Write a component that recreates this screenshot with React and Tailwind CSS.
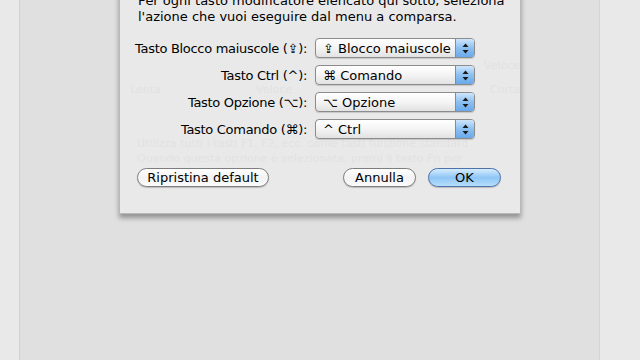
const rows = [
    { label: "Tasto Blocco maiuscole (⇪):", value: "⇪ Blocco maiuscole" },
    { label: "Tasto Ctrl (^):", value: "⌘ Comando" },
    { label: "Tasto Opzione (⌥):", value: "⌥ Opzione" },
    { label: "Tasto Comando (⌘):", value: "^ Ctrl" },
];

const PopupArrows = () => (
    <svg width="7" height="11" viewBox="0 0 7 11">
        <path d="M3.5 0.5 L6.5 4 L0.5 4 Z" fill="#1a1a1a" />
        <path d="M0.5 7 L6.5 7 L3.5 10.5 Z" fill="#1a1a1a" />
    </svg>
);

const Popup = ({ value }) => (
    <div className="flex h-[20px] w-[160px] overflow-hidden rounded-[4px] border border-[#8c8c8c] bg-gradient-to-b from-[#ffffff] via-[#f4f4f4] to-[#e2e2e2] shadow-[0_1px_1px_rgba(0,0,0,0.15)]">
        <div className="flex flex-1 items-center pl-[7px] text-[13px] leading-none text-black">{value}</div>
        <div className="flex w-[19px] items-center justify-center border-l border-[#6f8fb8] bg-gradient-to-b from-[#cfe6fb] via-[#8cc0f1] to-[#6aa9ea]">
            <PopupArrows />
        </div>
    </div>
);

const Button = ({ children, width, primary }) => (
    <div
        className={
            primary
                ? "flex h-[19px] items-center justify-center rounded-full border border-[#4f72a8] bg-gradient-to-b from-[#d6ecff] via-[#8fc6f6] to-[#b6defc] text-[13px] leading-none text-black shadow-[0_1px_1px_rgba(0,0,0,0.2)]"
                : "flex h-[19px] items-center justify-center rounded-full border border-[#7e7e7e] bg-gradient-to-b from-[#ffffff] via-[#f3f3f3] to-[#fbfbfb] text-[13px] leading-none text-black shadow-[0_1px_1px_rgba(0,0,0,0.2)]"
        }
        style={{ width }}
    >
        {children}
    </div>
);

const App = () => {
    return (
        <div className="flex h-[360px] w-[640px] overflow-hidden bg-[#e8e8e8] font-['DejaVu_Sans',sans-serif]">
            <div className="w-[20px] border-r border-[#d2d2d2] bg-[#e9e9e9]" />
            <div className="w-[580px] border-r border-[#d4d4d4] bg-[#e0e0e0]">
                <div className="relative ml-[99px] mt-[-30px] w-[402px] border-x border-b border-[#b9b9b9] bg-[#e9e9e9] shadow-[0_4px_5px_rgba(0,0,0,0.35)]">
                    {/* faint window behind, showing through */}
                    <div className="pointer-events-none absolute inset-0 text-[11px] leading-[12px] text-[#e2e2e2]">
                        <span className="absolute left-[10px] top-[114px]">Lenta</span>
                        <span className="absolute left-[136px] top-[114px]">Veloce</span>
                        <span className="absolute left-[364px] top-[90px]">Veloce</span>
                        <span className="absolute left-[370px] top-[114px]">Corta</span>
                        <span className="absolute left-[17px] top-[168px]">Utilizza tutti i tasti F1, F2, ecc. come tasti funzione standard</span>
                        <span className="absolute left-[17px] top-[183px]">Quando questa opzione è selezionata, premi il tasto Fn per</span>
                    </div>

                    <div className="relative">
                        <p className="pl-[18px] pt-[23px] text-[13px] leading-[16px] text-black">
                            Per ogni tasto modificatore elencato qui sotto, seleziona
                            <br />
                            l'azione che vuoi eseguire dal menu a comparsa.
                        </p>

                        <div className="mt-[13px] flex flex-col gap-[7px]">
                            {rows.map((row) => (
                                <div key={row.label} className="flex items-center">
                                    <div className="w-[187px] text-right text-[13px] leading-none tracking-[-0.3px] text-black">{row.label}</div>
                                    <div className="ml-[8px]">
                                        <Popup value={row.value} />
                                    </div>
                                </div>
                            ))}
                        </div>

                        <div className="mt-[29px] flex items-center pb-[26px] pl-[17px] pr-[19px]">
                            <Button width={132}>Ripristina default</Button>
                            <div className="flex-1" />
                            <Button width={73}>Annulla</Button>
                            <div className="w-[12px]" />
                            <Button width={73} primary>
                                OK
                            </Button>
                        </div>
                    </div>
                </div>
            </div>
            <div className="flex-1 bg-[#e9e9e9]" />
        </div>
    );
};

export default App;
